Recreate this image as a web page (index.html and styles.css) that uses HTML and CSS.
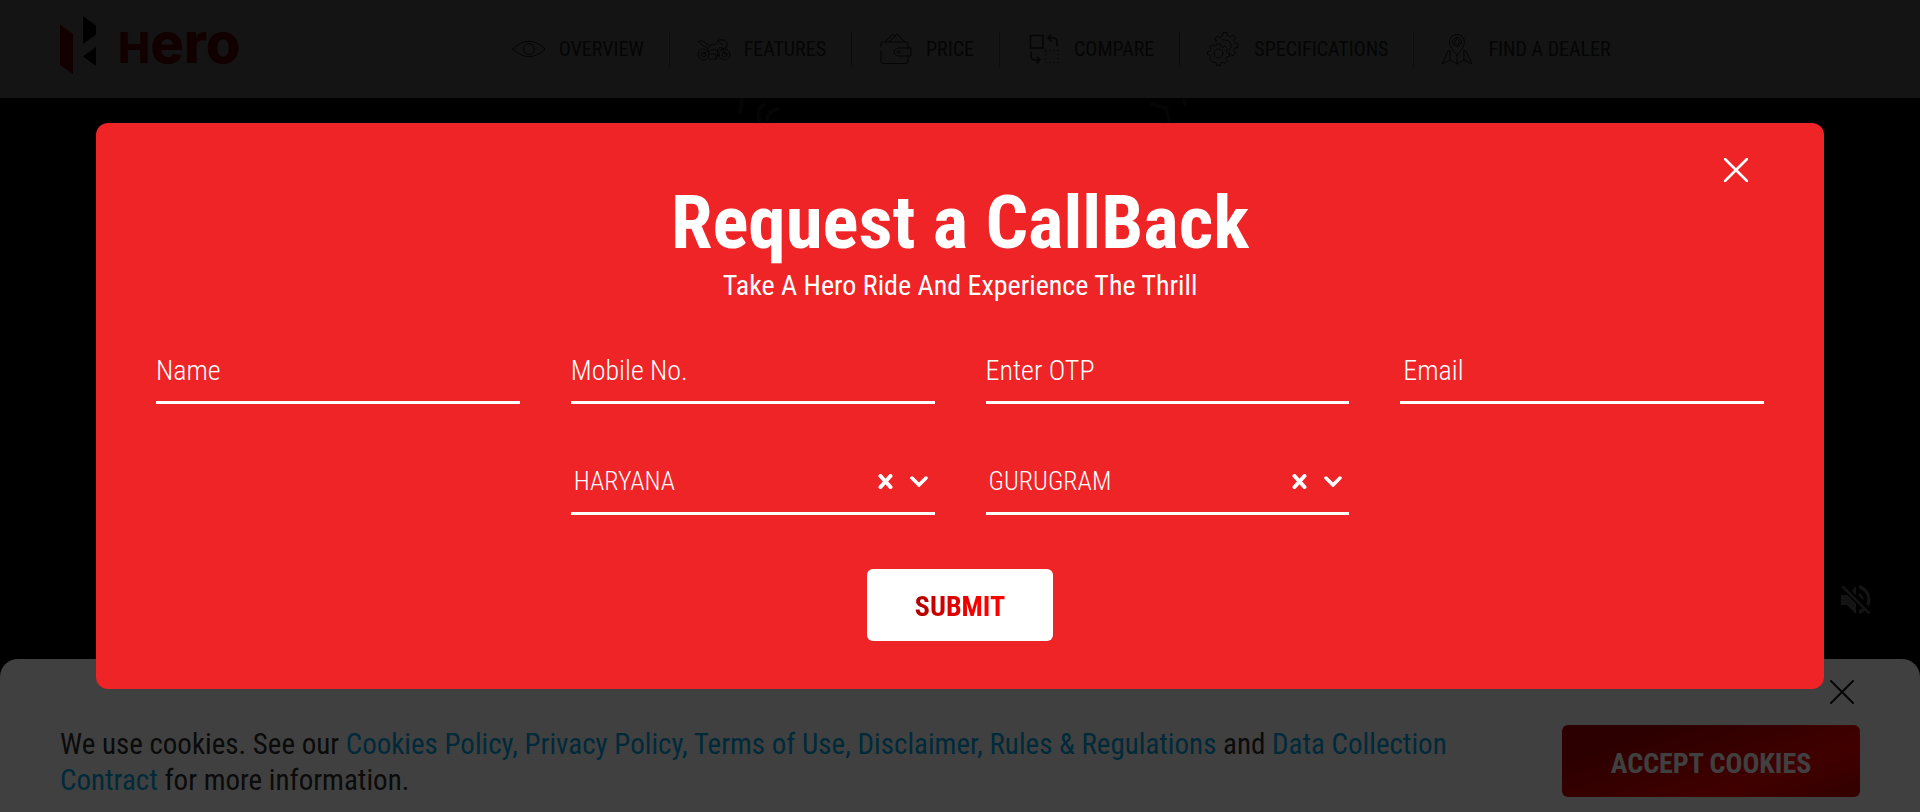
FILE: index.html
```html
<!DOCTYPE html>
<html lang="en">
<head>
<meta charset="utf-8">
<meta name="viewport" content="width=device-width, initial-scale=1">
<title>Hero | Request a CallBack</title>
<link rel="stylesheet" href="styles.css">
</head>
<body>
<header class="site-header">
  <a class="logo" href="#" aria-label="Hero home">
    <svg class="logo-mark" viewBox="0 0 36 58" aria-hidden="true">
      <path class="logo-red" d="M0 8.500L13 18v40L0 49z"/>
      <path d="M23 0l13 9.500v9L23 28zM36 31v19L23 40.500z"/>
    </svg>
    <span class="logo-word"><span class="logo-cap">H</span>ero</span>
  </a>
  <nav class="main-nav">
    <a class="nav-link" href="#">
      <svg class="icon" viewBox="0 0 34 34"><path d="M1 17Q17 1.500 33 17Q17 32.500 1 17z"/><circle cx="17" cy="17" r="5.500"/></svg>
      <span>OVERVIEW</span>
    </a>
    <a class="nav-link" href="#">
      <svg class="icon" viewBox="0 0 34 34"><circle cx="6.500" cy="22.500" r="5.500"/><circle cx="6.500" cy="22.500" r="2.500"/><circle cx="27.500" cy="22.500" r="5.500"/><circle cx="27.500" cy="22.500" r="2.500"/><path d="M1.500 9.500l3-1 8 5 6-1 3-4.500h6l3 3-1 4-3 1.500-4-1-2 3v6M1.500 9.500l5 4.500 4 2 1.500 5M12.500 19q5-3 9 0M12 27h7l3-4M14 13.500l-3 3M20.500 9l5 3.500M9 20l-3 2.500M25 16l3 6.500M14 22h5v5"/></svg>
      <span>FEATURES</span>
    </a>
    <a class="nav-link" href="#">
      <svg class="icon" viewBox="0 0 34 34"><path d="M2 15v-3q0-2 2-2h23q2 0 2 2v4M29 24v6q0 1.500-2 1.500H4q-2 0-2-2V19M6 10l8-8 3 3M10 10l8-8 8 8M31.500 16H19q-4 1-4 4t4 4h12.500z"/><circle cx="19.500" cy="20" r="1.300"/></svg>
      <span>PRICE</span>
    </a>
    <a class="nav-link" href="#">
      <svg class="icon" viewBox="0 0 34 34"><path class="thick" d="M3.500 3.500H16V16H3.500zM30 14v-4q0-4-4-4h-5m3-3l-3 3 3 3M4 20v4q0 4 4 4h5m-3-3l3 3-3 3"/><path class="dotted" d="M18.500 18.500H31V30.500H18.500z"/></svg>
      <span>COMPARE</span>
    </a>
    <a class="nav-link" href="#">
      <svg class="icon" viewBox="0 0 34 34"><circle cx="11.500" cy="21.500" r="4.500"/><path d="M9.700 12h3.600l.5 2.500 2 .9 2.200-1.400 2.500 2.500-1.400 2.200.9 2 2.500.5v3l-2.500.5-.9 2 1.400 2.200-2.500 2.500-2.200-1.400-2 .9-.5 2.500H9.700l-.5-2.500-2-.9L5 29.900l-2.500-2.500 1.400-2.200-.9-2L.500 22.700v-3l2.500-.5.9-2L2.500 15 5 12.500l2.200 1.400 2-.9zM10 9L7.500 7.500 10 4l3 1.500 2.500-1.500.5-3.500h4l.6 3.300 2.400 1 2.800-1.800 2.700 2.700-1.800 2.800 1 2.400 3.300.6v4l-3.300.6-1 2.400 1.800 2.800-2.500 2.700-2.500-1.500M15 8q7-1 9 4 1 4-2 7"/></svg>
      <span>SPECIFICATIONS</span>
    </a>
    <a class="nav-link" href="#">
      <svg class="icon" viewBox="0 0 34 34"><path d="M16 23Q8.500 15 8.500 10a7.500 7.500 0 0115 0Q23.500 15 16 23zM9.500 19H7L1 32l8-4 7 4 7-4 8 4-6-13h-2.500M9 28v-9M23 28v-9M16 32v-9"/><circle cx="16" cy="10" r="4.500"/><circle cx="16" cy="10" r="2.500"/></svg>
      <span>FIND A DEALER</span>
    </a>
  </nav>
</header>

<main class="hero">
  <svg class="hero-art" viewBox="0 0 460 26" aria-hidden="true"><path d="M12 0L10 14M30 26Q26 8 34 7M37 22Q38 12 48 11M422 6l14 4 4 16M454 0l1 6"/></svg>
  <button class="mute" type="button" aria-label="Unmute">
    <svg viewBox="0 0 30 30"><path d="M0 10h6.500L15 18.500V29l-9-9H0zM15 1v9.500L11 6zM18 0q11 3 11.500 14.500 0 3.500-1.700 7l-2.300-2.500q3.500-11-7.500-15.500zM18 8q5 2.500 4.700 7.500L18 11zM18 25q2.500-.8 4.300-2.300l2.200 2.300Q21.500 28 18 29zM.500 2.300L2.300.5 29.500 27.700l-1.800 1.800z"/></svg>
  </button>
</main>

<section class="cookie-bar" aria-label="Cookies">
  <button class="cookie-close" type="button" aria-label="Close"><svg viewBox="0 0 24 24"><path d="M1 1l22 22M23 1L1 23"/></svg></button>
  <p class="cookie-text">We use cookies. See our <a href="#">Cookies Policy,</a> <a href="#">Privacy Policy,</a> <a href="#">Terms of Use,</a> <a href="#">Disclaimer,</a> <a href="#">Rules &amp; Regulations</a> and <a href="#">Data Collection Contract</a> for more information.</p>
  <button class="accept" type="button">ACCEPT COOKIES</button>
</section>

<div class="overlay">
  <div class="modal" role="dialog" aria-modal="true" aria-labelledby="modal-title">
    <button class="modal-close" type="button" aria-label="Close"><svg viewBox="0 0 24 24"><path d="M1 1l22 22M23 1L1 23"/></svg></button>
    <h1 class="modal-title" id="modal-title">Request a CallBack</h1>
    <p class="modal-subtitle">Take A Hero Ride And Experience The Thrill</p>
    <form class="callback-form">
      <div class="fields">
        <div class="field"><input type="text" placeholder="Name" aria-label="Name"></div>
        <div class="field"><input type="tel" placeholder="Mobile No." aria-label="Mobile No."></div>
        <div class="field"><input type="text" placeholder="Enter OTP" aria-label="Enter OTP"></div>
        <div class="field field-inset"><input type="email" placeholder="Email" aria-label="Email"></div>
        <div class="field field-inset field-state">
          <select aria-label="State"><option>HARYANA</option></select>
          <button class="clear" type="button" aria-label="Clear state"><svg viewBox="0 0 15 15"><path d="M2.500 2l10 11M12.500 2l-10 11"/></svg></button>
          <svg class="chevron" viewBox="0 0 18 11"><path d="M2 2l7 7 7-7"/></svg>
        </div>
        <div class="field field-inset">
          <select aria-label="City"><option>GURUGRAM</option></select>
          <button class="clear" type="button" aria-label="Clear city"><svg viewBox="0 0 15 15"><path d="M2.500 2l10 11M12.500 2l-10 11"/></svg></button>
          <svg class="chevron" viewBox="0 0 18 11"><path d="M2 2l7 7 7-7"/></svg>
        </div>
      </div>
      <button class="submit" type="submit"><span>SUBMIT</span></button>
    </form>
  </div>
</div>
</body>
</html>
```

FILE: styles.css
```css
* { box-sizing: border-box; }

body {
  margin: 0;
  min-height: 100vh;
  display: flex;
  flex-direction: column;
  background: #000;
  font-family: "Roboto Condensed", "Liberation Sans Narrow", Roboto, sans-serif;
}

button {
  border: 0;
  padding: 0;
  background: none;
  font: inherit;
  cursor: pointer;
}

svg {
  display: block;
  fill: none;
  stroke-linecap: round;
}

a { text-decoration: none; }

/* Header */
.site-header {
  height: 98px;
  padding: 0 60px;
  display: flex;
  align-items: center;
  gap: 20px;
  background: #505050;
}

.logo {
  height: 58px;
  margin-bottom: 8px;
  display: flex;
  align-items: center;
  gap: 22px;
  color: #480000;
}

.logo-mark { width: 36px; height: 58px; fill: #000; }
.logo-red { fill: #480000; }

.logo-word {
  font-family: Inter, sans-serif;
  font-size: 56px;
  font-weight: 800;
  line-height: 56px;
}

.logo-cap { font-size: 43px; }

.main-nav {
  flex: 1;
  display: flex;
  align-items: center;
  justify-content: center;
}

.nav-link {
  height: 36px;
  padding: 0 25px 0 27px;
  display: flex;
  align-items: center;
  gap: 13px;
  color: #141414;
  font-size: 20px;
  line-height: 36px;
  white-space: nowrap;
}

.nav-link + .nav-link { border-left: 1px solid #303030; }
.icon { width: 34px; height: 34px; stroke: #141414; }
.thick { stroke-width: 1.5; }
.dotted { stroke-dasharray: 1 3; stroke-width: 1.5; stroke-linecap: butt; }

/* Hero */
.hero { position: relative; flex: 1; }

.hero-art {
  width: 460px;
  margin: 0 auto;
  stroke: #141414;
  stroke-width: 4;
}

.mute {
  position: absolute;
  right: 49px;
  bottom: 44px;
}

.mute svg { width: 30px; height: 30px; fill: #505050; }

/* Cookie bar */
.cookie-bar {
  position: relative;
  padding: 66px 60px 14px;
  display: flex;
  justify-content: space-between;
  align-items: flex-start;
  background: #fff;
  border-radius: 18px 18px 0 0;
}

.cookie-close { position: absolute; right: 66px; top: 21px; }
.cookie-close svg { width: 24px; height: 24px; stroke: #141414; stroke-width: 2; }

.cookie-text {
  flex: 1;
  max-width: 1420px;
  margin: 0;
  padding-top: 1px;
  color: #2c2c2c;
  font-size: 29px;
  line-height: 36px;
}

.cookie-text a { color: #00a8e8; }

.accept {
  width: 298px;
  height: 72px;
  padding-top: 4px;
  border-radius: 6px;
  background: linear-gradient(160deg, #b00000 20%, #ff0000 70%, #c80000);
  color: #fff;
  font-size: 28px;
  font-weight: 700;
}

/* Dialog */
.overlay {
  position: fixed;
  inset: 0;
  display: flex;
  align-items: center;
  justify-content: center;
  background: rgba(0, 0, 0, .75);
}

.modal {
  position: relative;
  width: 90%;
  padding: 59px 60px 48px;
  border-radius: 12px;
  background: #ee2427;
  color: #fff;
  text-align: center;
}

.modal-close { position: absolute; right: 76px; top: 35px; }
.modal-close svg { width: 24px; height: 24px; stroke: #fff; stroke-width: 2.5; }

.modal-title {
  margin: 0;
  font-size: 75px;
  font-weight: 700;
  line-height: 80px;
}

.modal-subtitle {
  margin: 6px 0 0;
  font-size: 28px;
  line-height: 36px;
}

.callback-form { margin-top: 33px; }

.fields {
  display: grid;
  grid-template-columns: repeat(4, 1fr);
  gap: 44px 51px;
}

.field {
  height: 67px;
  padding-top: 2px;
  display: flex;
  align-items: center;
  border-bottom: 3px solid #fff;
}

.field-inset { padding-left: 3px; }
.field-state { grid-column: 2; }

.field input,
.field select {
  flex: 1;
  min-width: 0;
  height: 60px;
  margin: 0;
  padding: 0;
  border: 0;
  outline: 0;
  appearance: none;
  background: transparent;
  color: #fff;
  font-family: inherit;
  font-size: 28px;
  font-weight: 300;
}

.field select { font-size: 26px; }

.field input::placeholder { color: #fff; opacity: 1; }

.clear svg { width: 15px; height: 15px; stroke: #fff; stroke-width: 4; }

.chevron {
  width: 18px;
  margin: 0 7px 0 17px;
  stroke: #fff;
  stroke-width: 3.5;
}

.submit {
  display: block;
  width: 186px;
  height: 72px;
  margin: 54px auto 0;
  padding-top: 3px;
  border-radius: 6px;
  background: #fff;
  font-size: 28px;
  font-weight: 700;
}

.submit span {
  background: linear-gradient(90deg, #b00000, #ff0000 75%);
  background-clip: text;
  color: transparent;
}
```
